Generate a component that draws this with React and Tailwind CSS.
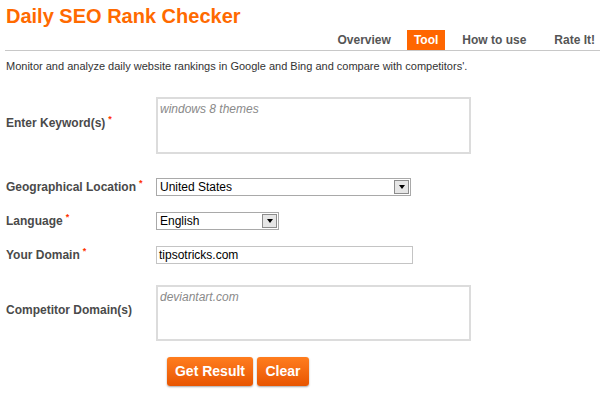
import React from "react";

const Req = () => (
  <span className="relative -top-[5px] ml-[3px] text-[9px] text-[#ff3300]">*</span>
);

const Label = ({ children, required, lift }) => (
  <div
    className={`w-[150px] shrink-0 text-[12px] font-bold text-[#4a4a4a] ${lift ? "pb-[6px]" : ""}`}
  >
    {children}
    {required && <Req />}
  </div>
);

const FakeSelect = ({ value, width }) => (
  <div
    className={`flex h-[18px] items-center border border-[#a9a9a9] bg-white ${width}`}
  >
    <span className="flex-1 pl-[3px] text-[12px] leading-none text-black">
      {value}
    </span>
    <span className="mr-[1px] flex h-[14px] w-[15px] items-center justify-center border border-[#8c8c8c] bg-[#e6e6e6]">
      <span className="h-0 w-0 border-x-[3px] border-t-[4px] border-x-transparent border-t-black" />
    </span>
  </div>
);

export default function App() {
  return (
    <div className="h-[396px] w-[600px] bg-white px-[6px] pt-[5px] font-['Liberation_Sans',Arial,sans-serif]">
      <h1 className="text-[20px] font-bold leading-[23px] text-[#ff6a00]">
        Daily SEO Rank Checker
      </h1>

      {/* Tabs */}
      <div className="-mr-[6px] -ml-[1px] mt-[2px] flex h-[21px] items-stretch justify-end border-b border-[#c8c8c8] text-[12px] font-bold text-[#555]">
        <div className="flex items-center pr-[16px]">Overview</div>
        <div className="flex items-center bg-[#ff6600] px-[7px] text-white">
          Tool
        </div>
        <div className="flex items-center pl-[17px] pr-[28px]">How to use</div>
        <div className="flex items-center pr-[5px]">Rate It!</div>
      </div>

      <p className="mt-[8px] text-[11px] leading-[14px] text-[#333]">
        Monitor and analyze daily website rankings in Google and Bing and
        compare with competitors'.
      </p>

      {/* Form */}
      <div className="mt-[24px] flex flex-col">
        <div className="flex items-center">
          <Label required lift>
            Enter Keyword(s)
          </Label>
          <div className="h-[57px] w-[315px] border-2 border-[#dcdcdc] px-[2px] pt-[1px] text-[12px] italic text-[#8a8a8a]">
            windows 8 themes
          </div>
        </div>

        <div className="mt-[24px] flex items-center">
          <Label required>Geographical Location</Label>
          <FakeSelect value="United States" width="w-[255px]" />
        </div>

        <div className="mt-[16px] flex items-center">
          <Label required>Language</Label>
          <FakeSelect value="English" width="w-[123px]" />
        </div>

        <div className="mt-[16px] flex items-center">
          <Label required>Your Domain</Label>
          <div className="flex h-[18px] w-[257px] items-center border border-[#c4c4c4] pl-[2px] text-[12px] text-black">
            tipsotricks.com
          </div>
        </div>

        <div className="mt-[21px] flex items-center">
          <Label lift>Competitor Domain(s)</Label>
          <div className="h-[56px] w-[315px] border-2 border-[#dcdcdc] px-[2px] pt-[1px] text-[12px] italic text-[#8a8a8a]">
            deviantart.com
          </div>
        </div>

        <div className="mt-[16px] flex gap-[4px] pl-[161px]">
          <button className="h-[29px] w-[86px] rounded-[3px] bg-gradient-to-b from-[#ff7d1e] to-[#e85500] text-[14px] font-bold text-white shadow-[0_1px_2px_rgba(0,0,0,0.35)]">
            Get Result
          </button>
          <button className="h-[29px] w-[52px] rounded-[3px] bg-gradient-to-b from-[#ff7d1e] to-[#e85500] text-[14px] font-bold text-white shadow-[0_1px_2px_rgba(0,0,0,0.35)]">
            Clear
          </button>
        </div>
      </div>
    </div>
  );
}
